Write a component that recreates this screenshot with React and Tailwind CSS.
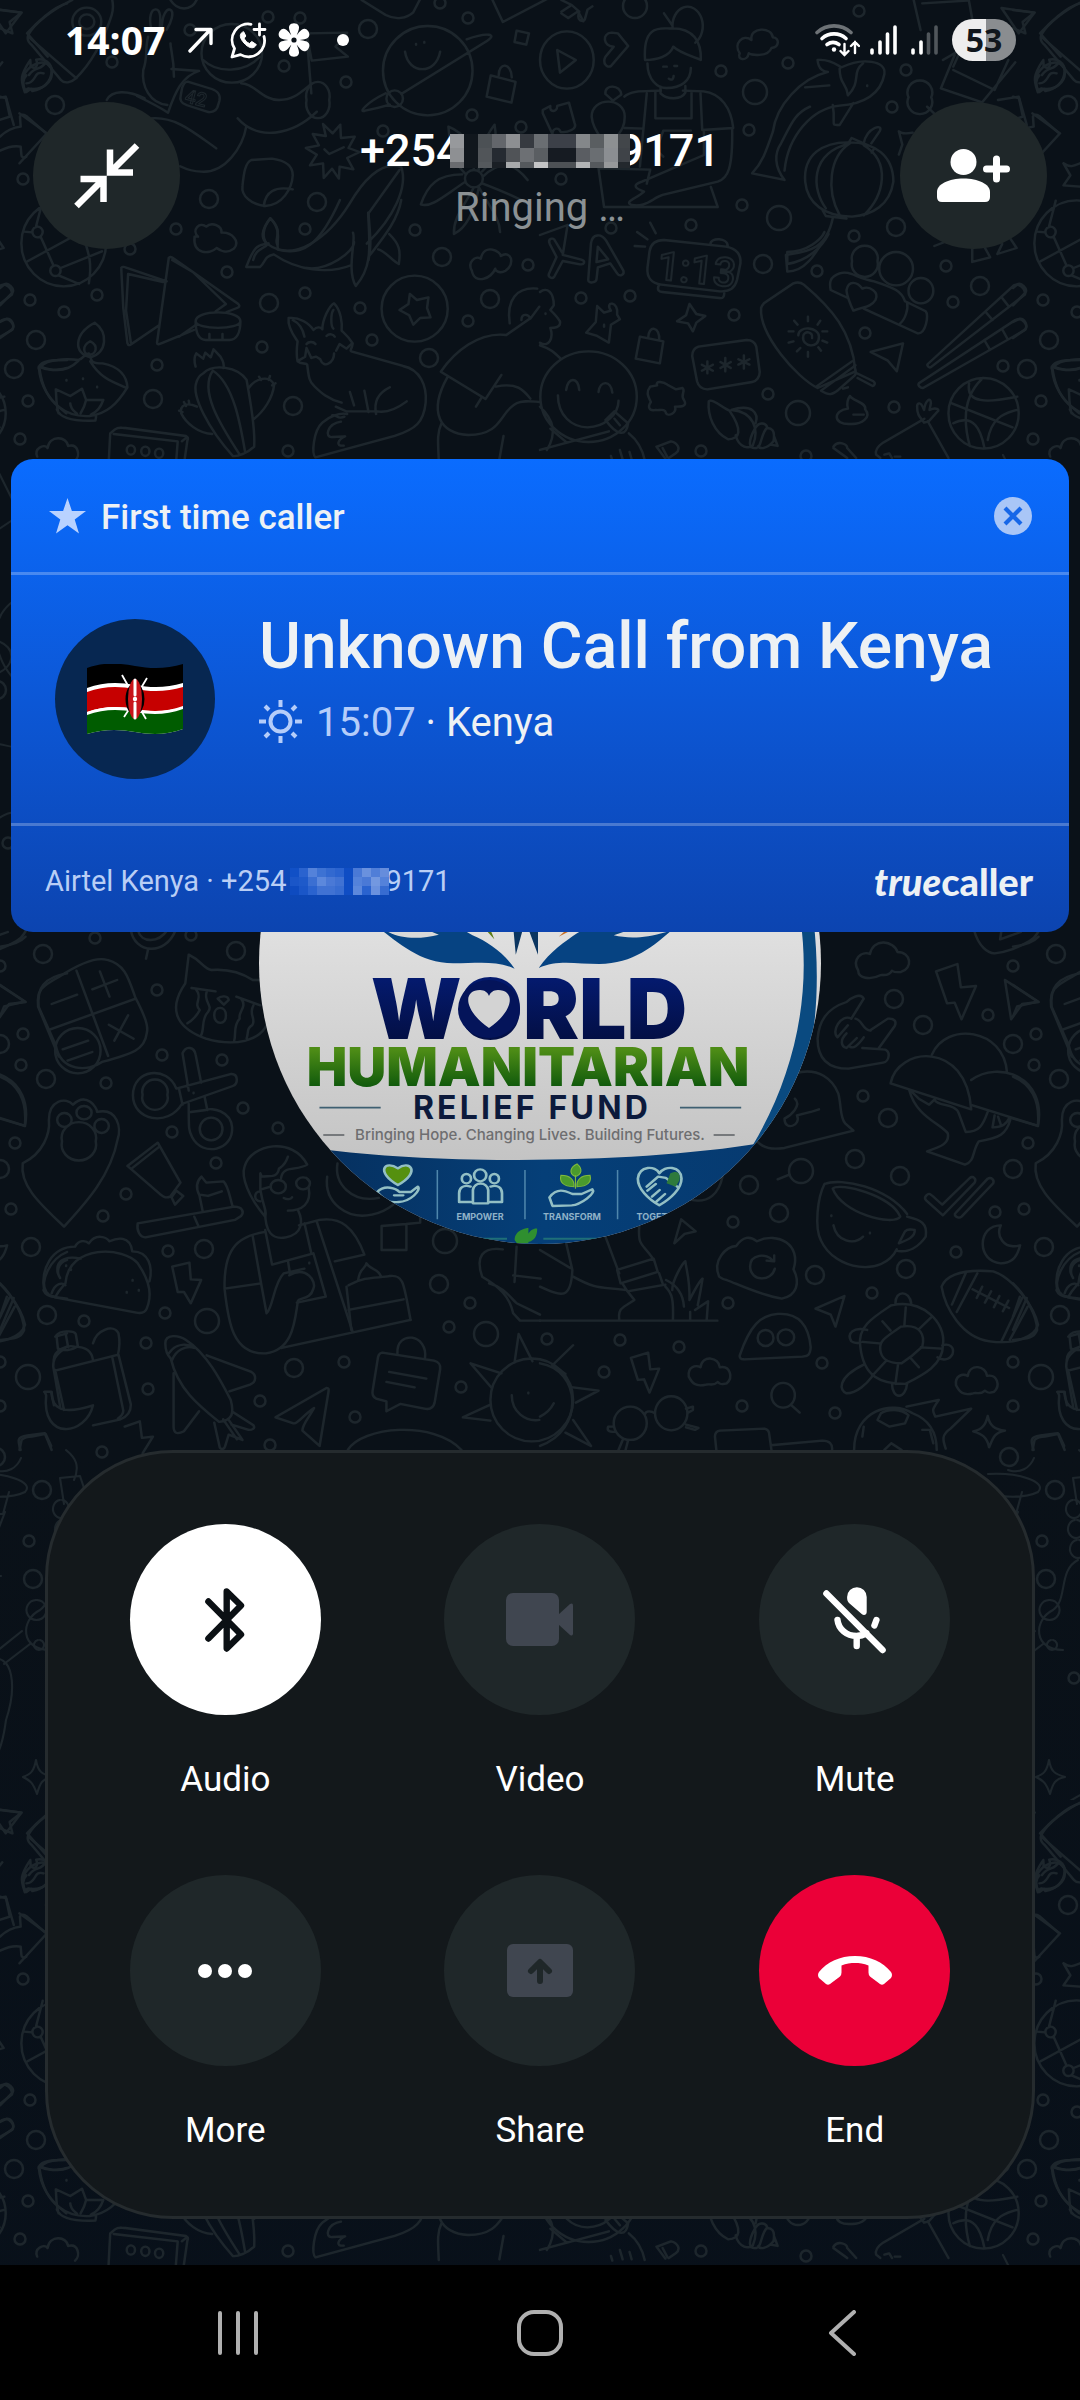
const DOTS_SMALL = [
  [112, 62], [23, 179], [176, 229], [305, 229], [383, 131], [472, 115], [521, 127], [415, 230], [346, 82], [468, 18],
  [440, 3], [284, 66], [268, 17], [300, 18], [130, 249], [190, 30], [721, 71], [788, 63], [906, 70], [892, 107],
  [749, 130], [561, 179], [742, 205], [691, 225], [854, 236], [859, 11], [611, 228], [30, 300], [97, 295], [64, 312],
  [157, 365], [28, 401], [20, 439], [305, 293], [360, 308], [262, 347], [372, 340], [528, 265], [468, 321], [288, 451],
  [227, 272], [817, 271], [946, 266], [953, 302], [734, 315], [581, 298], [630, 296], [865, 333], [1003, 366], [768, 394],
  [894, 407], [701, 451], [806, 456], [95, 938], [157, 990], [191, 935], [23, 1034], [21, 1065], [106, 1083], [162, 1055],
  [222, 1060], [243, 1108], [172, 1132], [278, 1128], [15, 1143], [11, 1209], [216, 1163], [126, 1194], [103, 1216],
  [168, 1251], [84, 1321], [165, 1313], [146, 1343], [148, 1389], [0, 1362], [0, 1406], [344, 1362], [260, 1401],
  [270, 1445], [355, 1417], [461, 1387], [449, 1327], [470, 1303], [988, 1015], [1013, 966], [863, 1096], [733, 1222],
  [995, 1212], [956, 1252], [872, 1293], [728, 1303], [679, 1347], [620, 1340], [547, 1339], [604, 1372], [822, 1363],
  [742, 1406], [835, 1413], [29, 1541], [61, 1678], [102, 1452], [8, 843], [1004, 585],
];

const DOTS_LARGE = [
  [55, 105, 9], [209, 199, 9], [317, 202, 9], [368, 29, 9], [635, 6, 12], [755, 92, 12], [779, 218, 12], [896, 227, 9],
  [36, 340, 9], [14, 369, 9], [153, 399, 9], [269, 303, 9], [293, 406, 9], [429, 358, 9], [442, 257, 9], [490, 299, 9],
  [763, 264, 9], [980, 286, 9], [798, 413, 12], [43, 954, 9], [236, 951, 9], [0, 1044, 9], [46, 1079, 9], [0, 1169, 9],
  [31, 1247, 9], [204, 1249, 9], [47, 1315, 9], [207, 1321, 12], [28, 1377, 12], [294, 1368, 9], [486, 1334, 12],
  [439, 1284, 9], [445, 1241, 12], [894, 999, 9], [923, 1025, 9], [888, 1118, 9], [855, 1159, 9], [900, 1176, 9],
  [801, 1171, 12], [749, 1185, 9], [779, 1213, 9], [815, 1275, 9], [906, 1269, 9], [1009, 1457, 9], [42, 1490, 9],
  [33, 1579, 9], [1010, 690, 9],
];

const DOODLES = [
  {
    at: 'translate(0 0) scale(.3444 .3333)',
    paths: [
      'M0 30 62 38 28 66 36 100 0 85', // star
      'M210 0C150 30 100 70 82 105c-4 12 0 22 10 30l85 105c10 12 30 8 42-4 50-50 80-110 105-190 6-20 4-36 2-46M82 110l140 125', // rocket
      'M210 65a42 42 0 1 0 84 0a42 42 0 1 0-84 0M230 65a22 22 0 1 0 44 0a22 22 0 1 0-44 0',
      'M88 180c-12 20-20 30-24 52-2 16 4 30 8 45 6-14 14-16 22-4 30-4 56-30 56-60 0-24-20-40-45-34 8 20-4 30-16 20zM84 225c20-30 34-10 50-40',
      'M0 290l18 5 22 80M0 410c20-20 40-28 60-30l-2-30c2-8 12-8 18-2l58 52M76 470c-6 6-14 2-14-6l-2-24c-20-4-40 2-60 12', // signpost
      'M440 90c-10-40 0-62 12-62 16 0 14 30 12 55M470 85c0-40 14-60 24-56 14 6 2 40-10 60M430 110c-10 40 0 60-14 100-6 50 20 100 70 105M505 230c0-60-10-80-10-100M488 338c-30-20-60-35-90-50M488 338c20-60 40-110 90-125l-80-6', // rabbit
      'M585 160a88 88 0 1 0 176 0a88 88 0 1 0-176 0M590 180c40 40 120 40 165-10M700 250c40 0 60 50 110 50 40 0 60-20 90-45', // astronaut
      'M310 300c15-30 60-30 110-5M440 355c70-5 120 40 188 90M715 380c-10 60-60 140-130 135-30 0-50-10-62-16M690 355c60 70 160 50 230-20',
      'M545 245l70 22c18 6 26 20 22 36l-6 20c-4 10-18 16-30 12l-60-20c-14-4-20-16-16-30l4-22c4-12 8-18 16-18z',
      'M890 100l118-2-34 42 36 30-105 12-15-82 14 180M890 300a34 44 0 1 0 66 0a34 44 0 1 0-66 0', // flag
      'M1112 212a130 134 0 1 0 260 0a130 134 0 1 0-260 0M1122 296a24 25 0 1 0 48 0a24 25 0 1 0-48 0M1165 282l250-160c30-20 0-26-60-4M1120 280c-60 30-80 60-60 52 20-4 40-8 72-18M1176 155c10 70 90 70 102 0M1208 132v2M1232 126v2', // saturn
      'M1500 92l36 8-8 34-34-8z',
      'M1425 226l72 20-12 62-72-18zM1448 226c0-40 36-40 38 6',
      'M1430 0l30 66 130-70M1050 0l70 45c30 16 60 10 80-8l20-40M495 0c20 34 60 34 76 0',
      'M966 400l22-26 2 40 40-4-18 34 32 12-36 18 18 34-40-8-2 36-20-30-24 28-2-44-38 6 20-32-32-20 38-8-18-34 38 6-8-36zM942 448l14 14 42-20', // badge
      'M730 480l60-4c40 6 60 20 60 50-2 40-30 90-80 92-40-4-70-30-66-60 4-40 8-70 26-78zM850 568c-50-10-80 6-84 50',
      'M575 710c-20-20 4-46 24-30 16-16 46-2 44 18 30-2 56 26 36 48-20 16-40 6-50-2-20 20-70 20-64-34z', // cloud
      'M785 655c-30 40-26 60-10 76 80 60 180-20 240-120 40-70 90-130 150-110 20 60-20 150-100 230M785 655c40 40 10 60 20 78M735 780c8-36 30-30 45-50M1070 640c4 60 10 100 0 140M1070 640l90-130',
      'M1350 536a26 26 0 1 0 52 0a26 26 0 1 0-52 0M1350 520c-40-40-44-90-48-140 50 20 70 60 74 128M1390 510c0-60 20-100 46-136 10 60-4 110-36 140M1402 530c60-60 100-30 130 10M1400 550c50 20 100 40 130 60M1352 545c-60 40-100 80-130 68 20-60 50-90 120-90M1376 562c-30 60-60 90-58 140 40-20 60-70 72-138M1390 560c30 60 60 90 62 136', // flower
    ],
  },
  {
    at: 'translate(540 0) scale(.3444 .3333)',
    paths: [
      'M62 35l30-20-30-15M92 15l22 20c-10 30 10 30 16 24l8-30 14-10M62 40l20 14 28-20 16 30',
      'M0 180a78 86 0 1 0 156 0a78 86 0 1 0-156 0M50 150l54 30-46 38z', // play
      'M190 170l24-30c-30 0-36-40-6-42l18 2 30 38-50 60c-10 8-26-8-16-28z',
      'M8 330l22-12c-4 20 20 20 20 0l34-10 16 60c10 20-20 30-40 28-6-18-24-10-24 6L8 340z',
      'M385 86a44 58 0 1 1 66 42M360 40l24 36M305 180c-8-120 60-90 80-95 60 0 84 40 82 95-20-10-60-20-80-40-10 30-50 40-82 40zM312 190c0 50 30 75 56 74 40 0 70-20 70-60M350 260v20c20 20 60 20 72-2v-20', // chef
      'M245 290c20-20 60-16 105-18M415 272l60 2c50 6 80 50 86 110l-90 6-5-110M335 275v80h105v-80M310 280l-20 220M476 395v70l-180 80c-30 10-20 20 6 30-20 20-60 30-36 40 40 8 60-20 90-30l160-40c30-10 44-40 42-160M245 384l55 2M170 505l150 4-10 42M170 505l16 116h330l-20-60M358 470l-20-20 20-58h80M358 200h10M390 198h8M374 236c10 8 14-2 14-8',
      'M150 350c0-60 96-60 96 0 0 50-30 50-44 110l-20-40c-16-20-30-40-32-70zM190 282c-4-30 44-30 46 2l-24 18z',
      'M580 160c-20-30 10-60 34-40-6-40 60-40 62-8 20 0 20 30-4 32-10 30-60 20-66 16-4 26-36 20-26 0z',
      'M806 180c40-4 60 18 70 22 60-30 130-20 124 20-10 60-60 90-130 95-80 8-150 90-160 195M806 180c2 30 20 36 30 36-80 20-150 100-160 180-20 60-30 90-60 124l94 20c-30-40-30-80-10-110 30-60 40-90 84-110M870 206c0 50 20 40 24 80 40-40 10-70 44-96M770 262l70-6M850 315c10 60-10 60 20 60l40-66M950 256v2', // koi
      'M770 545c-6-80 50-120 130-118 70 0 126 40 126 118-10 70-60 100-120 105-80 0-130-40-136-105zM900 430c-60 40-70 140-30 215M900 430c-120 30-110 140-70 195M940 436c80 50 60 150 0 210M895 430l10-16 66 30-8 14M940 430c10-50 60-60 46-36l-24 36M820 630l10 18 60 8M850 655c-20 100-80 100-136 110l4 50c60 0 90-70 120-120',
      'M1085 0l20 90M1110 10l130-8M1245 0l16 90M1340 24l96 14-46 62zM1568 10c-40 10-90 60-116 90l60 70M1200 200l26-60M1164 265l40-100M1164 265l120 42 96-120M1200 210l120 60 40-90M1170 180l50-30',
      'M1070 292a36 36 0 1 0 66 0a36 36 0 1 0-66 0M1124 320l34 34M1330 300l60-10 12 60-30 10M1430 340l80 60-80 90',
      'M1440 230c30-60 90-50 84-10 0 30-30 50-60 46l-14 10c-14-20-10-40 0-50M1450 250c30 0 20-40 50-30',
      'M1042 394c10 10 30 6 40 4M1042 394l10 40-10 30M1520 490c20 14 30 8 48 0M1520 490l20 36-20 30 48 4',
    ],
  },
  {
    at: 'translate(0 200) scale(.3444 .3333)',
    paths: [
      'M62 130a122 128 0 1 0 246 0a122 128 0 1 0-246 0M94 96a15 16 0 1 0 30 0a15 16 0 1 0-30 0M146 212a15 16 0 1 0 30 0a15 16 0 1 0-30 0M104 82l20-80M80 184l160-90M118 110l38 88M176 204l120-50M258 250c10-60 0-90-16-140M70 95l24 2M170 226l60 26', // globe
      'M0 264l14-12c10-4 30 14 22 26L0 316M0 366l20-10c14 0 24 20 16 32l-36 26',
      'M352 204l6 120 12 106c2 8 8 6 12 2l80-56M352 204c2-4 8-4 12-2l120 42M372 222l102 24M372 222l-6 110 14 96M490 174l-34 254c0 6 6 6 12 2l95-40M490 174c4-6 8-2 12 0l190 138c6 6 2 10-4 12l-30 12M500 180l60 36 96 96-30 22M520 410l50-36', // samosa
      'M568 364c0-36 130-36 130 0 0 26-130 26-130 0zM568 364c0 40 10 56 30 56h68c20 0 32-20 32-56M608 402v14M646 402v14',
      'M275 368c40 30 36 90-12 104-50-10-50-70 12-104zM262 424c26 14 16 40-2 40s-24-26 2-40zM118 500c20-24 80-24 110-20 14-4 14-16 30-20 10 20 0 30 40 30 50 10 70 40 72 72-30 50-60 80-110 86-60 4-130-30-145-140-4-2-4-6 3-8zM118 500c40 16 80 14 110-18M262 484c30 50 60 60 106 80M165 628c10 30 60 36 112 34l2-12M170 640c-8-30-6-50-8-72l42 20 34-22 12 34 50 0c-10 30-26 40-36 44M204 610c0 20 20 30 20 32M250 600c-4 20-10 30-16 40', // diya
      'M193 540v2M241 535v2M282 560v2',
      'M568 500c-6-20-4-30 2-40l20 16 6-18 16 14 8-24 20 22c12 20 10 30 8 34M590 520c30-30 100-20 126 20 10 60 26 140 22 200-20 20-50 30-62 28-70-80-120-180-106-220 6-20 10-20 20-28zM618 512c-40 60 20 160 78 252M618 512c60 40 80 160 94 246M722 564c20-30 60-40 74-10-4 40-30 80-60 104M752 530l6 10M784 528l-4 12M800 550l-10 6M572 620c-30-14-50-6-46 20 14 30 50 60 90 62M520 632l10 4M534 606l6 12M548 602l2 12', // cactus
      'M320 700l14-12c10-8 20-4 30-4l176 24c8 4 6 10 4 14l-14 100M320 700l-6 120M330 702l186 22-6 80M528 724l14-12',
      'M368 750a12 14 0 1 0 24 0a12 14 0 1 0-24 0M410 754a12 14 0 1 0 24 0a12 14 0 1 0-24 0M450 760a12 14 0 1 0 24 0a12 14 0 1 0-24 0',
      'M108 770c-10-24 20-40 30-26 6-40 56-36 60-6 30-8 36 30 20 44',
      'M785 55c-24 30-24 60-10 76-24 6-34 0-60 70h40c20-20 10-30 40-38 70 50 160 60 226 32M785 55c36 40 16 70 22 94 70 20 120-10 180-149M890 204c60 10 140-50 138-78M1025 98c10 20-20 110 8 160 50-60 40-120 36-220M1165 0c-10 60-50 110-90 164M1130 102c30 30 34 50 28 90-20-10-40-40-60-44',
      'M1108 326a96 99 0 1 0 192 0a96 99 0 1 0-192 0M1190 282l20 18 34-8-4 32 10 28-30 2-20 20-12-28-28-16 26-18z',
      'M838 354c-4 30 20 60 26 70-4 30-2 50 0 60 12 10 24 4 28 10 4 30 4 50 20 64 20 20 40 40 80 50M838 354c30-4 60 16 72 36 10-10 20-10 26-2 0-30 20-70 34-78 20 20 24 60 22 82 10 10 20 18 32 38-2 20-10 20-4 24l150 44c50 10 70 60 66 110-6 60-30 80-90 100l-230 64c-12-10-6-80 20-104 20-20 50-30 72-26M850 360c20 10 30 30 34 50M968 330c-8 10-8 50 0 56M890 432c6-8 20-8 26 0M948 408c8-8 20-6 24 2M866 482l20-12 4-26 14 30 14-4 12 8c10 30 40 10 40-18M1020 432l-14 14-20-14-10 20M1016 576l12 40M1058 572l12 64M1132 562c-40 20-46 50-40 80M975 620l30 14h90c30 6 60-10 86-30M1000 650c-20 10-20-6-36-4M990 665c-40 6-50 50-24 46l36-2c-20 10-30 30-4 28', // fox
      'M1480 370c-10-70 20-110 80-104M1514 360c0-20 20-20 26-4l26-36M1470 405c-80-10-150 50-190 110l130 82 46-72M1470 405l70-50M1400 590l-18 30M1300 530c-60 110-20 170 60 175 100 0 90-70 140-95 20-10 40-6 68-4M1440 560c60-14 80 10 100 36M1282 670c-14 30-10 60-8 110M1462 708l-12 70',
      'M1370 212c-14-26 10-46 26-36 10-50 60-20 58-8 30-20 44 24 14 44-20 12-30-2-30-6-10 30-60 50-68 6z',
    ],
  },
  {
    at: 'translate(540 200) scale(.3444 .3333)',
    paths: [
      'M0 105l80-30-14 90 54 14c14 4 8 16-4 14l-50-10-24 46c-6 10-20 2-16-8l22-50-20-40c-6-14 10-22 16-8l20 34M140 240l8-110c4-30 30-30 44-8l50 90c4 12-10 20-18 8l-20-30-36 12-4 36c0 10-24 14-24 2zM168 140l-4 46 34-8z',
      'M275 138l30 2M282 96l30 22M320 68l16 32M360 120l180 20c30 6 44 24 42 50l-10 50c-6 24-24 36-50 34l-170-20c-30-4-42-24-40-50l6-50c4-24 20-34 42-34zM495 132c0-20 50-20 50 6M345 256c-6 14 0 20 10 20l166 18c10 2 14-4 14-14', // clock
      'M650 310l86-60c10-4 20-4 30 4 80 70 140 140 150 260l-110 50c-60-30-170-160-164-240 2-6 4-10 8-14zM802 560l104-76M816 572l100-76M816 572c24 14 30 14 50-2l48-44c8-10 0-20-2-30M920 520l48 24c8 6 2 14-2 14l-44-24M880 566l14-4',
      'M750 406c0-30 60-26 60 4 0 40-50 30-46 0 2-20 30-16 26 4M778 350v14M738 362l10 12M814 362l-8 12M722 394h14M820 394h14M722 428l14-4M820 422l14 6M746 454l10-10M778 456v14M816 452l-8-10',
      'M870 220c30-10 50 16 100 24 60 20 80 30 90 60l60 30c10 10 0 70-24 66L940 326M870 220c-30 10-30 30-26 50l50 24M1066 308c4 20-6 50-20 62M890 270c6-30 30-26 46-4 20-10 50 10 38 34-14 24-40 20-64 32-10-20-20-50-20-62z', // onigiri
      'M906 184a38 38 0 1 0 74 0a38 38 0 1 0-74 0M985 206a49 50 0 1 0 98 0a49 50 0 1 0-98 0M1070 272a36 38 0 1 0 72 0a36 38 0 1 0-72 0',
      'M1126 492l250-236c14-8 36 12 32 28L1134 502c-4 2-12-6-8-10zM1342 294l18 24M1296 338l18 22M1100 550l280-190c20-10 40 16 28 30L1112 564c-8 0-16-8-12-14zM1342 388l14 26M1290 420l16 28', // chopsticks
      'M1186 640a102 106 0 1 0 204 0a102 106 0 1 0-204 0M1196 610l176 72M1282 538c-60 60-50 140-34 200M1246 550c-10 60 50 60 140 40M1200 670c60-30 80 20 90 72M1300 720c10-60 40-80 86-90',
      'M1255 140v46l52-14-18-34M1328 162l14-30M1328 162l56-18-22-34M1145 138l30-12',
      'M166 318l20 20 20-6c-20-30 24-30 18 12l8 14-26 16-6 54-34-20-32-10 28-32zM186 374v6',
      'M434 312l20 30 26 6-26 20-10 26-14-24-32-6 26-18z',
      'M290 410l68 14-10 66-70-14zM314 414c0-40 36-36 32 8',
      'M460 440l140-20c14 0 24 6 28 20l10 76c0 16-10 28-22 30l-130 22c-16 0-26-8-30-24l-14-76c0-16 6-24 18-28zM486 484v36M470 494l32 18M502 494l-32 18M538 474v40M524 486l30 18M554 486l-30 18M592 466v40M576 478l32 16M608 478l-32 16',
      'M1 590a140 136 0 1 0 280 0a140 136 0 1 0-280 0M76 570c4-40 36-40 38 0M170 576c4-36 36-36 40 2M52 586c0 60 40 96 86 96 50 0 90-40 90-80M190 660l26-26 40 36c-6 40-30 40-66-10M216 656l16 20M0 620c40 40 50 80 20 130M30 686l48 42M0 750l200-56M258 700c24 20 40 50 46 80M206 768l4 14M232 750l8 28M260 756l6 22',
      'M320 560l20-4c-6-16 20-10 30-2l24 14 20-4c10 10-8 20 4 36 12 20-10 20-26 20 6 20-20 30-26 20-2-16-20-8-30-10-20 4-24-10-14-24-10-20-14-30-2-46z',
      'M490 604c10-10 40 20 60 28 40 60 30 86-4 86-40-20-60-70-56-114zM556 630c60-20 80 10 70 40M568 706c10 40 40 40 50 30 20-50 0-100-60-106M624 686c10-20 30-20 36-4-20 20-16 60-32 62-24 4-24-20-4-58zM660 684c10 0 24 4 18 40-20 24-40 24-44 14M680 710l10 28-20-4',
      'M900 588c6 14 50 20 44 40 20 24-10 46-44 44-50 2-50-40-6-46-4-16 0-30 6-38zM910 644h30',
      'M960 456l94-26-18 84-26-32zM718 156c60 0 100-40 108-60M718 156v36c60-10 100-50 120-90',
      'M1095 620c0-10 10-20 20 10 4-30 20-40 20-20l-4 20c20-10 30 0 24 4l-26 30-14 4c-10-16-20-20-20-48zM1116 656l-120 72c-14 10-24 20-20 36l12 10M1126 664l60 110M1000 764l14-4 8 14M1030 770l16 0',
      'M338 740l26 36M340 740l40-16c20 4 30 24 14 36l-20 14M356 744l14 28M852 740c14-20 40-8 40 4l26 30M852 744l40 30M1486 500c10-20 40-20 82-20M1486 500c4 60 30 100 80 140M1486 500c30 14 50 12 82 4',
      'M0 276c20-16 40 0 40 40l-10 14c10 10 20 20 28 34 4 20-20 20-28 20 10 30-4 60-30 44M0 436c30 10 40 20 60 40M16 340v2',
    ],
  },
  {
    at: 'translate(0 930) scale(.3444 .3333)',
    paths: [
      'M0 50c30-4 60-14 74-30M0 165l72 50-60 14-12 30',
      'M112 230c-4-50 6-60 60-90 60-40 110-60 140-50 50 14 60 50 80 110 30 60 40 90 34 110-6 50-40 60-130 86-40 30-120 30-134-50zM222 122l92 256M146 298l248-92M150 222l74-28M268 178l72-28M290 124l28 76M316 284l72 42M372 256l-40 76M160 362a66 68 0 1 0 132 0a66 68 0 1 0-132 0M182 358l74-26M196 392l72-26', // calculator
      'M380 0c10 70 100 80 130 0M400 0c10 40 60 40 86 0M430 58l-6 28',
      'M548 74c40 20 40 40 66 46 50-4 90 10 120 30l40 0M548 74l-10 86c-60 90-10 140 60 166 80 24 160 10 180-50M556 174l70 10M686 200l70 26M570 180c20 24-10 40 10 60-10 20-20 30-36 40M600 186c-10 30 20 40 4 60-20 20-10 50-20 70M700 206c20 24-10 40-4 60-20 20-10 50-16 66M736 226c-16 30 10 40-4 60-16 10-10 20-16 40M632 206c10-10 30-10 32 4l-14 14zM622 256c0-30 34-30 34 0 2 30-34 30-34 0',
      'M530 370c10-24 34-20 38 4l16 84M548 482l-18-112M386 496c0-80 100-90 126-20l160-44c20 0 20 30 4 36l-148 54c-40 70-142 50-142-26zM414 494a37 37 0 1 0 72 0a37 37 0 1 0-72 0M520 478l10 46M548 522c0 80 0 80 10 100 30 60 120 40 116-30-4-50-60-60-76-52l-44 6M580 597a33 34 0 1 0 66 0a33 34 0 1 0-66 0M594 500l8 40M562 488v2', // scissors
      'M66 700c60-30 80-90 76-130 0-60 50-70 70-46 40-40 70 10 70 22 60-14 70 50 60 80-20 110-90 190-156 264-60-60-130-120-120-190zM180 634a50 48 0 1 0 98 0a50 48 0 1 0-98 0M166 570a20 20 0 1 0 42 0a20 20 0 1 0-42 0M222 548a22 20 0 1 0 44 0a22 20 0 1 0-44 0M274 588a21 21 0 1 0 42 0a21 21 0 1 0-42 0', // paw
      'M0 440c50 20 80 70 72 148L0 566M370 708l88-70 66 120-30 42c-14 6-20 0-30-8zM382 716l78-64M498 802l14-20 20 16-24 26z',
      'M585 740l14 18 50-4c14 14 16 40 26 74M585 740c-20 20-14 40-6 56l10 50M580 794l24 4 40-14M400 880l280-50c24 0 30 16 20 28l-18 12-260 52c-16 0-26-20-22-42zM564 860l12 28',
      'M756 780c10 60 20 60 14 80-50-60-70-120-60-150 20-70 140-90 182-6-30 20-70 0-76 40M836 680c-10 30-20 30-26 36-4 30-30 20-50 24l-4-10v50M786 770a22 20 0 1 0 44 0a22 20 0 1 0-44 0M860 760a20 18 0 1 0 40 0a20 18 0 1 0-40 0M758 778l28-8M890 744l8 10M896 772c10 50-20 70-60 70M824 804c10 6 20 4 24-2M770 846c0 60 20 84 60 76 50-10 50-50 36-80M756 784c-20 0-20 30 0 30', // reader
      'M770 906c-90 14-120 60-118 170l106-16-24-140M652 1076c10 90 20 200 120 194 80-10 84-100 92-150M758 1060l16 90c20-20 20-90 50-120l60-14M770 900l20 104 120-34 36 130-84 18M884 880l20 90M868 886l60-16c60-10 100 20 130 104l-86 20M920 876l104 330M836 992l6 40M818 1254l374-84M898 998v2M840 1036c50-30 80 20 70 40-10 40-50 20-46 46',
      'M1012 1066c50-30 90-20 120-28 40-4 40 20 60 132M1006 1070l14 130M1012 1140l160-32M1040 1050c6-40 20-30 24-50 10 20 36 16 42 40',
      'M950 740c-10 80 60 130 130 114 30-6 50-20 62-30M980 700c-10 60 40 120 120 104M1108 888l72-6v78h-72zM1180 882l40-4v-36',
      'M128 1080c-10-60 20-130 90-130 10-20 30-20 40-10 20-30 50-20 60-6 20-10 60-20 66 30 50 0 60 50 50 90M160 1100c-20 0-30-10-34-20M190 1060c10-120 170-110 210-60 40 60 40 100 26 136-6 16-20 14-30 12l-236-46c10-20 20-30 30-42zM150 1090c10-30 30-34 40-24M168 1030c-10-50 40-50 66-44M192 1006v2M206 1018v2', // taco
      'M500 1010l50-12 4 50 30 2-30 70-20-34-18 0zM385 1050v2M368 1086v2M403 1080v2',
      'M0 1060c40 40 70 100 70 140-10 26-30 26-70 30M0 1160l20-60M0 1200l40-96',
      'M164 1216c10-14 50-16 56-4l6 36c-16 14-44 16-58 8zM190 1208l8 44M156 1290c0-30 40-46 60-40 30 0 50 10 54 40M160 1322l184-48 36 150c0 30-20 40-30 44l-80 18M160 1320l26 120M326 1282l32 160c0 14-10 20-16 24M270 1240c10-40 60-60 74-30 6 30 2 50-2 66M130 1386h20c0 50 30 70 120 40-20 90-150 110-136-30z',
      'M480 1240c0-30 40-24 60-10 60 40 100 120 130 180 10 40 6 60-34 66-60-50-120-100-140-190-10-10-16-20-16-46zM490 1270c20-30 50-30 76-18M500 1290c10-30 40-44 64-36M600 1276l130 50c14 8 16 30-4 38l-60 20M504 1330v160c0 20 10 24 30 14l44-60M622 1478l16 74c6 10 14 4 16-4l10-34 40 16-40-60M676 1446l60 40c6 10-4 14-14 14l-50-16M648 1468l40 60', // rocket
      'M800 1462l148-88c8 0 6 6 6 10l-26 164-50-46c0-20 20-40 34-68-30 20-50 50-60 46z',
      'M1110 1268l150 24c14 4 20 10 18 26l-16 100c-4 16-14 22-30 18l-70-14-40 22v-30l-30-8c-10-6-12-14-10-24l14-90c2-16 4-22 14-24zM1154 1270c-4-70 90-60 80 16M1130 1326l108 20M1122 1356l82 16', // chat bag
      'M1424 1410a110 114 0 1 0 240 0a110 114 0 1 0-240 0M1494 1298l12-86 40 82M1428 1374l-62-74 90 30M1424 1472l-80-10 80-38M1486 1396c0 50 40 80 80 74M1534 1388v2',
      'M1400 1040c-20-60 0-90 60-82M1400 1040c50 30 80 60 90 110l20 22h58M1420 1060c40 10 60 40 80 60l68 34M1490 1036l80 10M1500 950l-6 106M1010 1560c40-70 250-90 330 0M60 1560c-10-30-10-40 20-44l50-6 20 50M362 1490l44-16 6 50 32-4-30 50',
    ],
  },
  {
    at: 'translate(540 930) scale(.3444 .3333)',
    paths: [
      'M924 122c-20-34 10-60 34-50 10-50 70-40 80-6 40 0 46 50 10 60-20 2-20 0-26-4-10 20-30 10-34 14-30 16-64 8-64-14z',
      'M1150 124l62-22 10 70 44-4-42 100-20-50-22 2zM1350 150l98 66-48 6-32 46zM1260 0c14 50 40 70 60 70 50-6 90-30 100-36 20-10 20-20 30-34M1340 0l-4 28 60-22',
      'M1568 130c-60 10-90 40-84 100l60 150',
      'M940 206c-10-20-40 0-50 10-60 20-80 60-84 110 0 60 30 90 90 90l100-18c20-4 24-40 0-40l-60-4M940 206l-36 60M960 300l50-34c20-2 26 10 20 22l-46 66M904 266c-30-16-60 40-40 56l30-36M890 310c-20 20-16 40 0 44l30-30M900 350c10 6 20 0 40-28M916 266c20 4 20 34 44 36', // rock hand
      'M1018 460c20-110 220-130 234 78zM1138 374c40-100 210-80 218 54M1252 450c80-60 220-10 194 138l-190-62M1072 480c20 80 90 100 112 130 6 30-20 40-60 54l110 40c30-10 20-40 40-70 60-10 80-20 92-66M1146 510c10 20 60 10 70 40l20 56c40 0 50-20 64-60M1080 486l20 20 30 18 16-16M1320 556l-6 36c30 0 40-10 50-30M1330 560l8 24',
      'M740 430c70-20 110 20 126 60 10 40 4 70 20 90l24 22-200 52c-40 6-60 0-80-20M740 506c20 20-10 50-30 60 0 40 50 20 36-10l40-10 24-8',
      'M690 748l34-14M440 810c50 10 80-20 90-70',
      'M826 762c50-20 180 10 240 90M826 762c-20 40-30 130-10 170 40 90 180 110 220 26M850 776c20-20 170 20 196 84-20 30-170-10-196-84zM1066 860c40 10 60 20 54 60-20 30-50 50-86 42M1060 904c10-10 20-4 28-4 2 20-20 30-46 40zM852 886c10 50 60 60 86 34M846 856v2M958 908v2', // cup
      'M1122 796c10-10 10-4 46 28l80-80c10-8 20 4 14 14l-92 98-48-44c-6-6-6-10 0-16zM1206 850l94-104c10-6 20 4 16 14l-92 100c-10 8-24-4-18-10z',
      'M1338 886c-70 0-70 110 0 114 40 0 50-30 56-54-50 14-70-30-56-60z',
      'M520 1040c-20-50 20-90 50-92 20-30 40-30 60-14 60-30 130 10 106 84 20 40 10 80-34 88-60-10-120-40-160-56-10 0-16-6-22-10zM682 1016c-10 40-70 40-72-6 0-40 50-40 64-20M680 976v18l-22-2',
      'M390 940l20-72 42 36-32 8zM190 920l40 110M288 890c-4 60 10 50 40 96M224 1020l106-34 12 40-108 34zM240 1062l14 22 110-20M346 1030l10 30M364 1070c20 20 24 40 22 100M254 1084l20 26-30 20c-14 10-16 20-14 40M0 1172h515M96 1040c70 40 80 30 150 40M76 940l18 80c-4 90-30 80-94 50M0 960l88 54', // sneaker
      'M366 1050c40 20 50 50 52 80M384 1080c0-30 30-80 38-86 4 30 14 60 12 116M434 1110c10-20 30-60 38-64-6 40-10 60-14 80M450 1140l38-26-4 56M436 1146v24',
      'M800 1136l84-38-26 92-14-36zM580 1276c30-90 60-120 110-124 60-4 90 30 96 100-2 30-14 26-24 28l-170 8c-8 0-14-4-12-12zM632 1224a23 24 0 1 0 46 0a23 24 0 1 0-46 0M690 1222a24 24 0 1 0 48 0a24 24 0 1 0-48 0', // eyes
      'M930 1250c-10-60 40-90 90-124 90-20 160 50 150 120 0 60-60 90-110 116-70 0-120-20-130-112zM988 1260c-4-30 20-40 60-70 60-10 70 30 62 60-20 20-30 30-60 50-50 0-60-20-62-40zM1062 1132l-4 54M994 1174l24 28M1138 1160l-38 38M936 1236l50 4M1166 1256l-60-4M1100 1312l-24-28M964 1338l40-44M1032 1362l8-62M1032 1120c0-40 40-40 46 0M950 1200c-40-10-60 10-46 34 6 6 20 6 26 4M1168 1246c20-6 36 4 30 26-10 20-30 20-44 10M940 1304c-80 40-70 80-50 86 30 0 60-30 74-50M1022 1360c0 50 40 50 44 0', // turtle
      'M1166 1070c20-50 100-50 150-46 60 20 120 110 130 160-10 40-70 60-140 50-80-10-130-100-140-164zM1196 1124l40-94M1210 1146l60-116M1340 1234l60-130M1364 1230l52-100M1256 1078l106 56M1284 1070l-16 34M1310 1084l-18 34M1334 1098l-16 34M1360 1112l-16 32',
      'M1568 966c-50 20-80 90-60 120 14 20 30 14 60 20M1568 990c-30 10-30 40-20 54M1534 1220l34-10M1568 1250c-40 30-40 40-40 60l20 120M1502 1386h20l8 40',
      'M264 1284l50-16 6 50 26-2-28 72-16-40-18 2zM432 1340c-4-30 20-36 34-28 6-40 54-30 56 0 30-6 40 30 20 48-20 6-20 0-26-4-14 14-24 4-34 8-30 8-40-4-50-24zM1208 1366c-4-30 20-36 34-28 6-40 54-30 56 0 30-6 40 30 20 48-20 6-20 0-26-4-14 14-24 4-34 8-30 8-40-4-50-24z',
      'M214 1480a48 50 0 1 0 96 0a48 50 0 1 0-96 0M334 1450a46 50 0 1 0 94 0a46 50 0 1 0-94 0M304 1454c4-14 20-10 30-4M214 1490h-16c-4 10 0 16 20 16M424 1436l20-6v10l-14 8M424 1484l36 10-10 6-26-8M240 1530l-16 40M256 1530l-10 40', // glasses
      'M672 1396a34 37 0 1 0 68 0a34 37 0 1 0-68 0M728 1424l26 24',
      'M912 1560c0-120 110-150 170-110 50 20 70 60 70 110M990 1450l-10 20 34 20 46-10 10-24c-20-20-60-20-80-6zM940 1490l-4 30M1110 1500h22l10 40M1000 1560l20-20 30 20M1064 1430l94-20c-20 30-20 30-10 50l104-24-60 60c-30 20-20 40-14 60',
      'M1300 1458c6 30 20 40 50 44-30 6-34 20-46 50-6-30-20-40-46-48 26-4 36-20 42-46zM512 1560l-4-40c0-10 4-16 14-18l130-6c10 2 14 10 14 20l6 44M670 1546l150-14c20 0 30 10 28 28M1430 1560l6-30c10-10 20-10 30-10l40-8 16 36M96 1372l74 10-66 36M96 1470l52 78-74-40M96 1246l-60 60 38 26M0 1300c120 20 130 200 0 248M40 1420c-10 20-20 30-40 40',
    ],
  },
  {
    at: 'translate(0 0)',
    paths: [
      'M1003 455l30 60-30 20M1028 600c-30 20-20 60 0 80M1003 860c-10-40 20-60 50-40',
      'M-5 1470c12 4 22-2 26-12M66 1450c10 8 14 16 8 30M60 1478l20-2 4 12M60 1478l4 26M-25 1474c30-2 60 8 50 18-16 8-50 4-50 0l4 22h24l6-22M5 1512l-10 26',
      'M60 1500a8 9 0 1 0 2 0M62 1520a8 9 0 1 0 2 0M64 1540a8 9 0 1 0 2 0M65 1560c-20 10-10 40-25 50-20 10-20 40 10 40',
      'M-14 1660c30-10 30 30 20 60-4 30-10 40-20 46M-8 1655l30-24M4 1664l26-20M38 1640a5 5 0 1 0 2 0M-12 1655l10 12',
      'M36 1760c2 12 6 14 16 17-10 2-12 6-15 17-4-11-6-13-14-17 8-3 11-6 13-17M10 1834c30-26 60-40 70-46M36 1600a10 10 0 1 0 1 0',
      'M990 1520c14-10 20 14 10 26s0 30 14 30M985 1620c20 0 24 30 4 36M995 1700l16 14-20 24M-6 640c26 6 20 30 0 34M1000 740c20 10 40 0 40 30',
    ],
  },
];

function Wallpaper() {
  return (
    <svg className="absolute inset-0 h-full w-full" aria-hidden="true">
      <defs>
        <g id="doodles" fill="none" stroke="#1d262c" strokeLinecap="round" strokeLinejoin="round">
          {DOODLES.map((group, i) => (
            <g key={i} transform={group.at} strokeWidth={i === 6 ? 2 : 7}>
              {group.paths.map((d, j) => (
                <path key={j} d={d} />
              ))}
            </g>
          ))}
          <g strokeWidth="2.400">
            {DOTS_SMALL.map(([x, y], i) => (
              <circle key={i} cx={x} cy={y} r="5.500" />
            ))}
            {DOTS_LARGE.map(([x, y, r], i) => (
              <circle key={i} cx={x} cy={y} r={r} />
            ))}
          </g>
          <g strokeWidth="2" fontFamily="Roboto, sans-serif" fontWeight="500">
            <text x="184" y="102" fontSize="19" transform="rotate(14 184 102)" strokeWidth="1">42</text>
            <text x="656" y="279" fontSize="40" transform="rotate(6 656 279)">1:13</text>
          </g>
        </g>
        <pattern id="wallpaper" width="1013" height="1800" patternUnits="userSpaceOnUse">
          <use href="#doodles" />
          <use href="#doodles" x="-1013" />
          <use href="#doodles" x="1013" />
        </pattern>
      </defs>
      <rect width="100%" height="100%" fill="url(#wallpaper)" />
    </svg>
  );
}

function StatusBar() {
  return (
    <div className="flex h-20 items-center justify-between pr-16 pl-[65px]">
      <div className="flex items-center">
        <span className="font-['Open_Sans',sans-serif] text-[39px] leading-10 font-bold">14:07</span>
        <svg className="ml-[23px]" width="25" height="26" viewBox="0 0 25 26" fill="none" stroke="#fff" strokeWidth="3.400" strokeLinecap="round" strokeLinejoin="round">
          <path d="M2 24 22 3M8 2.500h15v14" />
        </svg>
        <svg className="ml-[17px]" width="37" height="37" viewBox="0 0 37 37" fill="none" stroke="#fff" strokeWidth="2.800" strokeLinecap="round" strokeLinejoin="round">
          <path d="M21 2.300A16 16 0 0 0 4.500 26.500L2 35l8.500-2.400A16 16 0 0 0 34 14.500" />
          <path d="M29.500 2v11M24 7.500h11" />
          <path d="M12 10.500c-3 2-2 6 2 10.500s9 6.500 11.500 3l.8-1.500-4.500-3-2.300 2c-2.500-1-4.500-3-5.300-5.300l1.600-2.200-2-4z" fill="#fff" strokeWidth="1" />
        </svg>
        <svg className="ml-[11px]" width="32" height="34" viewBox="0 0 32 34" fill="#fff">
          {[0, 60, 120, 180, 240, 300].map((deg) => (
            <path key={deg} transform={`rotate(${deg} 16 17)`} d="M14 14C12 9 10 5 11.500 2.500c1.500-3 7.500-3 9 0C22 5 20 9 18 14z" />
          ))}
          <circle cx="16" cy="17" r="5.500" />
          <circle cx="16" cy="17" r="2.600" fill="#0a1118" />
        </svg>
        <span className="ml-[27px] h-3 w-3 rounded-full bg-white" />
      </div>
      <div className="flex items-center">
        <svg width="45" height="36" viewBox="0 0 45 36" fill="none" stroke="#fff" strokeWidth="3.600" strokeLinecap="round">
          <path d="M2 10.500a25 25 0 0 1 34 0" stroke="#6d7276" />
          <path d="M7 16.500a18 18 0 0 1 24 0M12 22.500a10.500 10.500 0 0 1 12 0" />
          <circle cx="19" cy="27.500" r="2.200" fill="#fff" stroke="none" />
          <path d="M29.500 22v11m-4-4 4 4 4-4M40 31V20m-4 4 4-4 4 4" strokeWidth="2.400" />
        </svg>
        <svg className="ml-[10px]" width="27" height="30" viewBox="0 0 27 30" stroke="#fff" strokeWidth="3.600" strokeLinecap="round">
          <path d="M2 25v3M10 17v11M17.500 9v19M25 2v26" />
        </svg>
        <svg className="ml-[14px]" width="27" height="30" viewBox="0 0 27 30" stroke="#fff" strokeWidth="3.600" strokeLinecap="round">
          <path d="M2 25v3M10 17v11" />
          <path d="M17.500 9v19M25 2v26" stroke="#50565b" />
        </svg>
        <span className="ml-[14px] flex h-[42px] w-16 items-center justify-center rounded-full bg-linear-to-r from-[#ededed] from-53% to-[#8a8d90] to-53% font-['Open_Sans',sans-serif] text-[32px] leading-10 font-bold text-[#10161c]">
          53
        </span>
      </div>
    </div>
  );
}

const HEADER_BLOCKS = [
  ['#97999c', '#11171d', '#4c5155', '#63666b', '#8d8f92', '#363a40', '#6a6e72', '#3c4048', '#3c4048', '#84878a', '#5a5e61', '#8d9092', '#42464a'],
  ['#8e9093', '#11171d', '#515559', '#252a31', '#505357', '#6d7074', '#5a5e62', '#161b22', '#161b22', '#5a5d62', '#6a6e72', '#8b8e92', '#3f4348'],
  ['#6a6c70', '#11171d', '#55595d', '#1a1f25', '#a8aaac', '#55595d', '#c4c5c6', '#4d5155', '#4d5155', '#b2b4b6', '#55595d', '#97999b', '#23282d'],
];

const CARD_BLOCKS = [
  ['#1150c6', '#2a63cf', '#5482da', '#3d72d3', '#3269d0', '#2a63cf', '#0f4dc4', '#4a79d6', '#6a91de', '#507ed8', '#668ddc'],
  ['#1a56c8', '#1e5aca', '#3b6fd2', '#5c88dc', '#4a79d6', '#4072d3', '#0f4dc4', '#5482da', '#4a79d6', '#7398e0', '#5482da'],
  ['#0e4bc0', '#1a56c8', '#2a63cf', '#4072d3', '#4072d3', '#376cd1', '#0f4dc4', '#5c88dc', '#2a63cf', '#6a91de', '#376cd1'],
];

function Mosaic({ rows, cell, width, height, className }) {
  return (
    <svg className={className} width={width} height={height} shapeRendering="crispEdges" aria-hidden="true">
      {rows.map((row, y) =>
        row.map((color, x) => <rect key={`${x}-${y}`} x={x * cell} y={y * cell} width={cell} height={cell} fill={color} />)
      )}
    </svg>
  );
}

function Header() {
  return (
    <header className="flex items-start justify-between px-[33px] pt-[22px]">
      <button type="button" aria-label="Minimize" className="flex h-[147px] w-[147px] items-center justify-center rounded-full bg-[#1f2729]">
        <svg width="66" height="66" viewBox="0 0 66 66" fill="none" stroke="#fff" strokeWidth="6.500">
          <path d="M36 6.500V29.500H59M35 30.500 63 2.500M6.500 36H29.500V59M30.500 35 2.500 63" />
        </svg>
      </button>
      <div className="flex flex-col items-center pt-5">
        <h1 className="flex items-center text-[45px] leading-[58px] font-medium">
          +254
          <Mosaic rows={HEADER_BLOCKS} cell={14} width={180} height={34} className="relative -mx-3" />
          9171
        </h1>
        <p className="text-[40px] leading-[56px] text-[#8b9194]">Ringing …</p>
      </div>
      <button type="button" aria-label="Add participant" className="flex h-[147px] w-[147px] items-center justify-center rounded-full bg-[#1f2729]">
        <svg width="73" height="53" viewBox="0 0 73 53" fill="#fff">
          <circle cx="26.500" cy="13" r="13" />
          <path d="M0 43c0-8 12-13.500 26.500-13.500S53 35 53 43v5q0 5-5 5H5q-5 0-5-5z" />
          <path d="M59.500 10v20M49.500 20h20" stroke="#fff" strokeWidth="7" strokeLinecap="round" />
        </svg>
      </button>
    </header>
  );
}

function KenyaFlag() {
  return (
    <svg width="96" height="70" viewBox="0 0 96 70">
      <defs>
        <clipPath id="flag-shape">
          <path d="M0 4C16-2 32-1 48 2s32 3 48-2v65c-16 6-32 6-48 3s-32-3-48 2z" />
        </clipPath>
      </defs>
      <g clipPath="url(#flag-shape)">
        <path d="M0-4h96v40H0z" fill="#000" />
        <path d="M0 24c16-6 32-6 48-3s32 3 48-2v32H0z" fill="#fff" />
        <path d="M0 28c16-6 32-6 48-3s32 3 48-2v20c-16 5-32 5-48 2s-32-3-48 3z" fill="#c60000" />
        <path d="M0 48c16-6 32-6 48-3s32 3 48-3v32H0z" fill="#fff" />
        <path d="M0 51c16-6 32-6 48-3s32 3 48-3v32H0z" fill="#005c00" />
      </g>
      <path d="M35 11 48 34 60 14M37 53 48 36 59 55" stroke="#fff" strokeWidth="1.800" fill="none" />
      <ellipse cx="48" cy="35" rx="9.500" ry="16" fill="#000" />
      <ellipse cx="48" cy="35" rx="7" ry="20" fill="#c8141a" />
      <path d="M48 16v15M48 39v15" stroke="#fff" strokeWidth="3" strokeLinecap="round" />
      <circle cx="48" cy="35" r="2.200" fill="#fff" />
    </svg>
  );
}

function CallerCard() {
  return (
    <section className="absolute inset-x-[11px] top-[459px] overflow-hidden rounded-[22px] bg-linear-to-b from-[#0a6cff] to-[#0c44b0] text-[#edf1f4]">
      <div className="flex h-[113px] items-center justify-between pr-[37px] pl-[38px]">
        <div className="flex items-center gap-[15px]">
          <svg width="37" height="36" viewBox="0 0 37 36" fill="#b9d2ff">
            <path d="M18.500 0l4.400 13H37L25.700 21.600 30 35.500 18.500 27.200 7 35.500l4.300-13.900L0 13h14.100z" />
          </svg>
          <span className="pt-1 text-[35px] leading-10 font-medium">First time caller</span>
        </div>
        <button type="button" aria-label="Close" className="block">
          <svg width="38" height="38" viewBox="0 0 38 38">
            <circle cx="19" cy="19" r="19" fill="#a9c6f7" />
            <path d="M11 11l16 16M27 11 11 27" stroke="#1767e8" strokeWidth="4.200" />
          </svg>
        </button>
      </div>
      <div className="flex h-[254px] items-start border-y-3 border-white/25 pt-11 pl-11">
        <div className="flex h-40 w-40 shrink-0 items-center justify-center rounded-full bg-[#072751]">
          <KenyaFlag />
        </div>
        <div className="ml-11 -mt-[10px]">
          <h2 className="text-[64px] leading-[76px] font-medium whitespace-nowrap">Unknown Call from Kenya</h2>
          <p className="mt-3 flex items-center text-[40px] leading-[52px]">
            <svg className="mr-[14px] mb-1" width="43" height="43" viewBox="0 0 43 43" fill="none" stroke="#b5cdfa" strokeWidth="4">
              <circle cx="21.500" cy="21.500" r="10" />
              <path d="M21.500 0v7M21.500 36v7M0 21.500h7M36 21.500h7M6 6l4 4M33 33l4 4M37 6l-4 4M10 33l-4 4" />
            </svg>
            <span className="text-[#b5cdfa]">15:07</span>
            <span className="whitespace-pre"> · Kenya</span>
          </p>
        </div>
      </div>
      <div className="flex h-[106px] items-center justify-between pt-1 pr-9 pl-[34px]">
        <p className="flex items-center text-[29px] leading-9 text-[#b9cef5]">
          Airtel Kenya · +254
          <Mosaic rows={CARD_BLOCKS} cell={9} width={99} height={27} className="relative ml-1 -mr-1" />
          9171
        </p>
        <div className="font-['Lato',sans-serif] text-[38px] leading-10 font-black">
          <span className="italic">true</span>caller
        </div>
      </div>
    </section>
  );
}

function Avatar() {
  return (
    <svg width="562" height="562" viewBox="0 0 562 562" role="img" aria-label="World Humanitarian Relief Fund">
      <defs>
        <clipPath id="avatar-circle">
          <circle cx="281" cy="281" r="281" />
        </clipPath>
        <linearGradient id="paper" x1="0" y1="0" x2="0" y2="1">
          <stop offset="0.45" stopColor="#dfdfdf" />
          <stop offset="0.85" stopColor="#c4c4c4" />
        </linearGradient>
        <linearGradient id="green" x1="0" y1="0" x2="0" y2="1">
          <stop offset="0.25" stopColor="#4d8c16" />
          <stop offset="0.8" stopColor="#115a0c" />
        </linearGradient>
        <linearGradient id="navy" x1="0" y1="0" x2="0" y2="1">
          <stop offset="0.2" stopColor="#041a6e" />
          <stop offset="0.8" stopColor="#030f45" />
        </linearGradient>
        <linearGradient id="band" x1="0" y1="0" x2="1" y2="0">
          <stop offset="0" stopColor="#06305f" />
          <stop offset="0.5" stopColor="#053f78" />
          <stop offset="1" stopColor="#063a70" />
        </linearGradient>
      </defs>
      <g clipPath="url(#avatar-circle)">
        <rect width="562" height="562" fill="url(#paper)" />
        <g transform="translate(-18 238) scale(.3827 .3333)">
          {/* side ribbon */}
          <path d="M1462 0C1492 240 1440 480 1335 680h70c90-200 115-440 91-680z" fill="#0a4a80" />
          {/* hands */}
          <path d="M355 20c60 50 110 108 200 110 60 0 110-10 160 16-30-50-70-80-110-100l-60-40z" fill="#064382" />
          <path d="M385 36c40 24 90 20 132 8l-30-14H380z" fill="#d8d8d8" />
          <path d="M1136 20c-60 60-110 110-200 112-60 0-110-14-158 12 30-50 70-80 100-104l60-40z" fill="#064382" />
          <path d="M1112 36c-60 20-100 20-138 10l40-16h100z" fill="#d8d8d8" />
          <path d="M712 30h24l-18 74zM752 30h24v74z" fill="#0b3560" />
          <path d="M640 30l22 28-10-28z" fill="#5b7a14" />
          <path d="M830 50l20-20h14z" fill="#c46a20" />
          {/* blue band */}
          <path d="M200 686c340 50 840 46 1180-20v360H200z" fill="url(#band)" />
          <g stroke="#4f86ac" strokeWidth="4">
            <path d="M513 750v148M742 750v148M984 750v148" />
          </g>
          <path d="M205 563h160M1147 563h160" stroke="#3f6072" strokeWidth="5" />
          <path d="M215 645h55M1235 645h55" stroke="#5c6064" strokeWidth="5" />
          <g fill="none" stroke="#93bfc4" strokeWidth="7" strokeLinejoin="round" strokeLinecap="round">
            <path d="M410 795c-60-40-34-76 0-50 30-26 62 10 0 50z" fill="#55900f" />
            <path d="M356 816c20-24 50-10 58 0h30l18-16c10 10-20 46-50 46-30 4-40-10-56-30M400 826h24" />
            <path d="M609 766a16 18 0 1 0 32 0a16 18 0 1 0-32 0M577 776a12 14 0 1 0 24 0a12 14 0 1 0-24 0M650 776a12 14 0 1 0 24 0a12 14 0 1 0-24 0" />
            <path d="M606 850v-40c4-26 36-26 40 0v40zM600 800c-20-8-30 6-30 20v26h30M652 800c20-8 30 6 30 20v26h-30" />
            <path d="M806 832c20-30 40-20 60-10h24l28-14c10 12-30 46-54 48l-50 2z" />
            <path d="M1093 856c-30-20-56-50-56-80 4-40 46-40 56-16 14-24 56-24 58 16 0 30-28 60-58 80zM1060 800l30-30 20 4 34 30M1074 830l20-20M1086 844l22-22M1062 812l22-20" />
          </g>
          <path d="M874 806v-40M874 770c-20-10-12-30 4-38 16 16 12 30-4 38zM870 800c-30 0-38-16-34-34 24 0 36 14 34 34zM878 800c30 0 38-16 34-34-24 0-36 14-34 34z" fill="#4a9a2c" stroke="#7fb93c" strokeWidth="3" />
          <path d="M1112 790l10-30c20-10 26 0 24 20l-10 20z" fill="#2e7a3c" />
          <path d="M715 960c0-30 30-36 36-36v46h-30zM748 950c4-20 20-26 26-24 0 20-6 36-24 40z" fill="#2f8f2f" />
          <path d="M620 956h75M790 956h160" stroke="#1f6f78" strokeWidth="6" />
        </g>
        <g textAnchor="middle" fontFamily="Inter, sans-serif">
          <text x="270" y="357" fontSize="84" fontWeight="900" fill="url(#navy)">WORLD</text>
          <text x="269" y="404" fontSize="54" fontWeight="900" fill="url(#green)">HUMANITARIAN</text>
          <text x="273" y="437" fontSize="32" fontWeight="700" fill="#0c1a3c" className="tracking-widest">RELIEF FUND</text>
          <text x="271" y="458" fontSize="15" fontWeight="500" fill="#6e6e70">Bringing Hope. Changing Lives. Building Futures.</text>
          <g fontSize="9" fontWeight="700" fill="#8fb2c8">
            <text x="137" y="538">HOPE</text>
            <text x="221" y="538">EMPOWER</text>
            <text x="313" y="538">TRANSFORM</text>
            <text x="402" y="538">TOGETHER</text>
          </g>
        </g>
        {/* heart set in the letter O */}
        <ellipse cx="230" cy="327" rx="31" ry="29" fill="#04145a" />
        <path d="M230 346c-26-18-26-38-9-38 5 0 8 3 9 6 1-3 4-6 9-6 17 0 17 20-9 38z" fill="#d3d3d3" />
      </g>
    </svg>
  );
}

function BluetoothIcon() {
  return (
    <svg width="40" height="64" viewBox="0 0 40 64" fill="none" stroke="#0b1014" strokeWidth="6.400" strokeLinecap="round" strokeLinejoin="round">
      <path d="M3.400 13.500 36 46.500 21.700 60.500V3.500L36 17.500 3.400 50.500" />
    </svg>
  );
}

function VideoIcon() {
  return (
    <svg width="67" height="53" viewBox="0 0 67 53" fill="#404650">
      <rect width="53" height="53" rx="7" />
      <path d="M52 22 64 11q3-1.500 3 1.500v28q0 3-3 1.500L52 31z" />
    </svg>
  );
}

function MicOffIcon() {
  return (
    <svg width="63" height="68" viewBox="0 0 63 68" fill="none" stroke="#fff" strokeWidth="6.400" strokeLinecap="round">
      <path d="M24.100 11a9.800 9.800 0 0 1 19.600 0v15c0 3-3 4-5 2L26 17c-1.500-2-1.900-3-1.900-6z" fill="#fff" stroke="none" />
      <path d="M3.400 7.500 59.600 64M14.500 34c1 9 9 16 19 16 4 0 7-1 10-3M53.400 34 51.400 39.500M33.700 51v9" />
    </svg>
  );
}

function MoreIcon() {
  return (
    <svg width="54" height="14" viewBox="0 0 54 14" fill="#fff">
      <circle cx="7" cy="7" r="7" />
      <circle cx="27" cy="7" r="7" />
      <circle cx="47" cy="7" r="7" />
    </svg>
  );
}

function ShareIcon() {
  return (
    <svg width="66" height="53" viewBox="0 0 66 53">
      <rect width="66" height="53" rx="6" fill="#404650" />
      <path d="M33 37V19M24 27l9-9 9 9" fill="none" stroke="#1f2729" strokeWidth="6" strokeLinecap="round" strokeLinejoin="round" />
    </svg>
  );
}

function EndIcon() {
  return (
    <svg width="74" height="29" viewBox="0 0 74 29" fill="#fff">
      <path d="M1 16C9 6 22 0 37 0s28 6 36 16q2 3 0 6l-7 6q-2 1.500-4 0L52 20.500q-1.500-1.500-1.500-4V9.500C46 7.500 41 7 37 7s-9 .5-13.500 2.500v7q0 2.500-1.500 4L12 28q-2 1.500-4 0l-7-6q-2-3 0-6z" />
    </svg>
  );
}

const CONTROLS = [
  { label: 'Audio', icon: BluetoothIcon, color: 'bg-white' },
  { label: 'Video', icon: VideoIcon, color: 'bg-[#1f2729]' },
  { label: 'Mute', icon: MicOffIcon, color: 'bg-[#1f2729]' },
  { label: 'More', icon: MoreIcon, color: 'bg-[#1f2729]' },
  { label: 'Share', icon: ShareIcon, color: 'bg-[#1f2729]' },
  { label: 'End', icon: EndIcon, color: 'bg-[#eb0038]' },
];

function Controls() {
  return (
    <div className="relative mx-[45px] mb-[46px] grid grid-cols-3 gap-y-[74px] rounded-[128px] border-3 border-[#252b2e] bg-[#13181b] px-5 pt-[71px] pb-16">
      {CONTROLS.map(({ label, icon: Icon, color }) => (
        <button key={label} type="button" className="flex flex-col items-center gap-11">
          <span className={`flex h-[191px] w-[191px] items-center justify-center rounded-full ${color}`}>
            <Icon />
          </span>
          <span className="text-[35px] leading-[42px]">{label}</span>
        </button>
      ))}
    </div>
  );
}

function NavigationBar() {
  return (
    <nav className="relative grid h-[135px] grid-cols-3 place-items-center bg-black px-[87px]">
      <button type="button" aria-label="Recents">
        <svg width="42" height="44" viewBox="0 0 42 44" stroke="#b0b0b0" strokeWidth="4" strokeLinecap="round">
          <path d="M3 2v40M21 2v40M39 2v40" />
        </svg>
      </button>
      <button type="button" aria-label="Home">
        <svg width="46" height="46" viewBox="0 0 46 46" fill="none" stroke="#b0b0b0" strokeWidth="4">
          <rect x="2" y="2" width="42" height="42" rx="15" />
        </svg>
      </button>
      <button type="button" aria-label="Back">
        <svg width="28" height="46" viewBox="0 0 28 46" fill="none" stroke="#b0b0b0" strokeWidth="4" strokeLinecap="round" strokeLinejoin="round">
          <path d="M26 2 3 23l23 21" />
        </svg>
      </button>
    </nav>
  );
}

export default function App() {
  return (
    <div className="relative isolate flex min-h-screen flex-col bg-linear-to-b from-[#0a1118] from-60% to-[#08101a] font-['Roboto',sans-serif] text-white">
      <Wallpaper />
      <div className="relative">
        <StatusBar />
        <Header />
      </div>
      <main className="relative flex flex-1 items-end justify-center pb-[206px]">
        <Avatar />
      </main>
      <CallerCard />
      <Controls />
      <NavigationBar />
    </div>
  );
}
